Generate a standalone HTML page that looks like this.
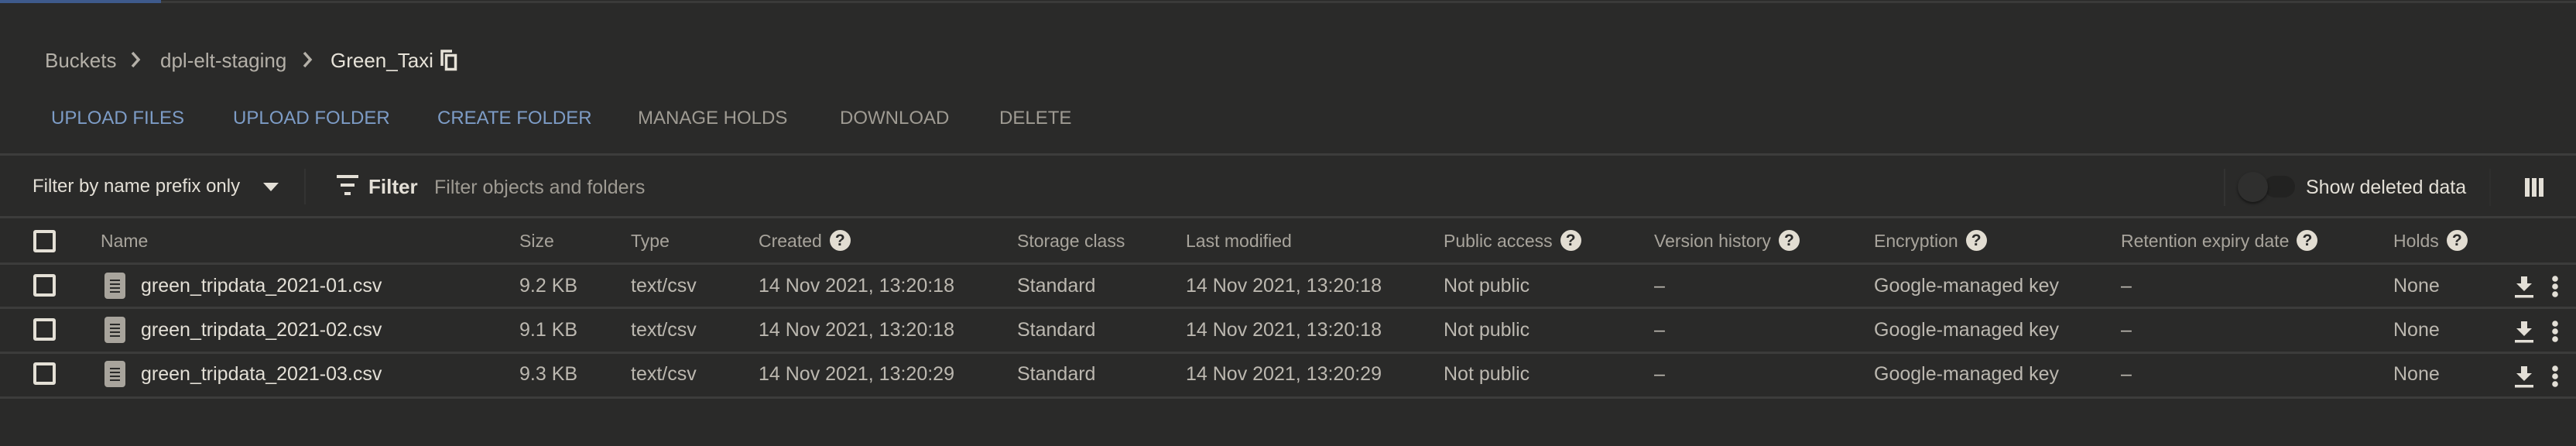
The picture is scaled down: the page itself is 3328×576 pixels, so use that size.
<!DOCTYPE html>
<html><head><meta charset="utf-8"><style>
*{margin:0;padding:0;box-sizing:border-box}
body{width:3328px;height:576px;background:#2a2a29;font-family:"Liberation Sans",sans-serif;color:#c9c5bc;position:relative;overflow:hidden;font-size:25px}
.a{position:absolute;white-space:nowrap;line-height:1}
.hl{position:absolute;left:0;width:3328px;height:4px;background:#3c3c3b}
.btn{color:#7d9cc6;font-size:24px}
.btn.g{color:#9f9b93}
.h{color:#a8a49c;font-size:23px;top:300px}
.q{display:inline-block;width:27px;height:27px;border-radius:50%;background:#e2ddd2;color:#2a2a29;font-weight:bold;font-size:21px;text-align:center;line-height:27px;vertical-align:middle;margin-left:10px;margin-top:-4px}
.cb{position:absolute;left:43px;width:29px;height:29px;border:4px solid #e4e0d6;border-radius:3px}
.c{font-size:25px;color:#bcb8b0}
.fi{position:absolute;left:135px;width:27px;height:34px;background:#a8a49c;border-radius:4px}
.fi i{position:absolute;left:7px;width:13px;height:2px;background:#2a2a29}
</style></head><body>
<div style="position:absolute;left:0;top:0;width:208px;height:4px;background:#3e5a8c"></div>
<div style="position:absolute;left:208px;top:1px;width:3120px;height:3px;background:#3a3a39"></div>

<div class="a" style="left:58px;top:65px;color:#b4b0a8;font-size:26px">Buckets</div>
<svg class="a" style="left:168px;top:64px" width="16" height="26" viewBox="0 0 16 26"><path d="M3 4l8 9-8 9" stroke="#b4b0a8" stroke-width="3.5" fill="none"/></svg>
<div class="a" style="left:207px;top:65px;color:#b4b0a8;font-size:26px">dpl-elt-staging</div>
<svg class="a" style="left:390px;top:64px" width="16" height="26" viewBox="0 0 16 26"><path d="M3 4l8 9-8 9" stroke="#b4b0a8" stroke-width="3.5" fill="none"/></svg>
<div class="a" style="left:427px;top:65px;color:#e6e2d8;font-size:26px">Green_Taxi</div>
<svg class="a" style="left:568px;top:63px" width="26" height="30" viewBox="0 0 26 30"><path d="M3 22V3h13" stroke="#e6e2d8" stroke-width="3.5" fill="none"/><rect x="8.5" y="8.5" width="12" height="18" stroke="#e6e2d8" stroke-width="3.5" fill="none"/></svg>

<div class="a btn" style="left:66px;top:141px">UPLOAD FILES</div>
<div class="a btn" style="left:301px;top:141px">UPLOAD FOLDER</div>
<div class="a btn" style="left:565px;top:141px">CREATE FOLDER</div>
<div class="a btn g" style="left:824px;top:141px">MANAGE HOLDS</div>
<div class="a btn g" style="left:1085px;top:141px">DOWNLOAD</div>
<div class="a btn g" style="left:1291px;top:141px">DELETE</div>

<div class="hl" style="top:198px;height:3px"></div>

<div class="a" style="left:42px;top:229px;color:#e3dfd6;font-size:24px">Filter by name prefix only</div>
<svg class="a" style="left:340px;top:234px" width="20" height="14"><path d="M0 2h20L10 13z" fill="#e3dfd6"/></svg>
<div style="position:absolute;left:393px;top:218px;width:2px;height:46px;background:#333332"></div>
<svg class="a" style="left:435px;top:226px" width="28" height="28"><rect x="0" y="0" width="28" height="4" fill="#e3dfd6"/><rect x="5" y="11" width="18" height="4" fill="#e3dfd6"/><rect x="10" y="22" width="8" height="4" fill="#e3dfd6"/></svg>
<div class="a" style="left:476px;top:228px;color:#e3dfd6;font-size:26px;font-weight:bold">Filter</div>
<div class="a" style="left:561px;top:230px;color:#9e9a92;font-size:25px">Filter objects and folders</div>
<div style="position:absolute;left:2873px;top:218px;width:2px;height:48px;background:#333332"></div>
<div style="position:absolute;left:2925px;top:227px;width:40px;height:28px;border-radius:14px;background:#222221"></div>
<div style="position:absolute;left:2891px;top:222px;width:39px;height:39px;border-radius:50%;background:#2f2f2e;box-shadow:0 2px 3px rgba(0,0,0,.5)"></div>
<div class="a" style="left:2979px;top:230px;color:#e3dfd6;font-size:25px">Show deleted data</div>
<div style="position:absolute;left:3216px;top:218px;width:2px;height:48px;background:#2e2e2d"></div>
<svg class="a" style="left:3262px;top:230px" width="25" height="25"><rect x="0" y="0" width="6" height="24" fill="#e3dfd6"/><rect x="9" y="0" width="6" height="24" fill="#e3dfd6"/><rect x="18" y="0" width="6" height="24" fill="#e3dfd6"/></svg>

<div class="hl" style="top:279px;height:3px"></div>

<div class="cb" style="top:297px"></div>
<div class="a h" style="left:130px">Name</div>
<div class="a h" style="left:671px">Size</div>
<div class="a h" style="left:815px">Type</div>
<div class="a h" style="left:980px">Created<span class="q">?</span></div>
<div class="a h" style="left:1314px">Storage class</div>
<div class="a h" style="left:1532px">Last modified</div>
<div class="a h" style="left:1865px">Public access<span class="q">?</span></div>
<div class="a h" style="left:2137px">Version history<span class="q">?</span></div>
<div class="a h" style="left:2421px">Encryption<span class="q">?</span></div>
<div class="a h" style="left:2740px">Retention expiry date<span class="q">?</span></div>
<div class="a h" style="left:3092px">Holds<span class="q">?</span></div>

<div class="hl" style="top:339px;height:3px"></div>

<div class="cb" style="top:354px"></div>
<div class="cb" style="top:411px"></div>
<div class="cb" style="top:468px"></div>

<div class="fi" style="top:352px"><i style="top:9px"></i><i style="top:14px"></i><i style="top:19px"></i><i style="top:24px"></i></div>
<div class="fi" style="top:409px"><i style="top:9px"></i><i style="top:14px"></i><i style="top:19px"></i><i style="top:24px"></i></div>
<div class="fi" style="top:466px"><i style="top:9px"></i><i style="top:14px"></i><i style="top:19px"></i><i style="top:24px"></i></div>

<div class="a c" style="left:182px;top:357px;color:#e3dfd6">green_tripdata_2021-01.csv</div>
<div class="a c" style="left:671px;top:357px">9.2 KB</div>
<div class="a c" style="left:815px;top:357px">text/csv</div>
<div class="a c" style="left:980px;top:357px">14 Nov 2021, 13:20:18</div>
<div class="a c" style="left:1314px;top:357px">Standard</div>
<div class="a c" style="left:1532px;top:357px">14 Nov 2021, 13:20:18</div>
<div class="a c" style="left:1865px;top:357px">Not public</div>
<div class="a c" style="left:2137px;top:357px">–</div>
<div class="a c" style="left:2421px;top:357px">Google-managed key</div>
<div class="a c" style="left:2740px;top:357px">–</div>
<div class="a c" style="left:3092px;top:357px">None</div>

<div class="hl" style="top:396px;height:3px"></div>

<div class="a c" style="left:182px;top:414px;color:#e3dfd6">green_tripdata_2021-02.csv</div>
<div class="a c" style="left:671px;top:414px">9.1 KB</div>
<div class="a c" style="left:815px;top:414px">text/csv</div>
<div class="a c" style="left:980px;top:414px">14 Nov 2021, 13:20:18</div>
<div class="a c" style="left:1314px;top:414px">Standard</div>
<div class="a c" style="left:1532px;top:414px">14 Nov 2021, 13:20:18</div>
<div class="a c" style="left:1865px;top:414px">Not public</div>
<div class="a c" style="left:2137px;top:414px">–</div>
<div class="a c" style="left:2421px;top:414px">Google-managed key</div>
<div class="a c" style="left:2740px;top:414px">–</div>
<div class="a c" style="left:3092px;top:414px">None</div>

<div class="hl" style="top:454px;height:3px"></div>

<div class="a c" style="left:182px;top:471px;color:#e3dfd6">green_tripdata_2021-03.csv</div>
<div class="a c" style="left:671px;top:471px">9.3 KB</div>
<div class="a c" style="left:815px;top:471px">text/csv</div>
<div class="a c" style="left:980px;top:471px">14 Nov 2021, 13:20:29</div>
<div class="a c" style="left:1314px;top:471px">Standard</div>
<div class="a c" style="left:1532px;top:471px">14 Nov 2021, 13:20:29</div>
<div class="a c" style="left:1865px;top:471px">Not public</div>
<div class="a c" style="left:2137px;top:471px">–</div>
<div class="a c" style="left:2421px;top:471px">Google-managed key</div>
<div class="a c" style="left:2740px;top:471px">–</div>
<div class="a c" style="left:3092px;top:471px">None</div>

<div class="hl" style="top:512px;height:3px"></div>

<svg class="a" style="left:3248px;top:357px" width="26" height="28"><path d="M9 0h8v9h6L13 19 3 9h6z" fill="#e3dfd6"/><rect x="1" y="24" width="24" height="3.5" fill="#e3dfd6"/></svg>
<svg class="a" style="left:3296px;top:356px" width="10" height="28"><circle cx="5" cy="4" r="3.8" fill="#e3dfd6"/><circle cx="5" cy="14" r="3.8" fill="#e3dfd6"/><circle cx="5" cy="24" r="3.8" fill="#e3dfd6"/></svg>
<svg class="a" style="left:3248px;top:415px" width="26" height="28"><path d="M9 0h8v9h6L13 19 3 9h6z" fill="#e3dfd6"/><rect x="1" y="24" width="24" height="3.5" fill="#e3dfd6"/></svg>
<svg class="a" style="left:3296px;top:414px" width="10" height="28"><circle cx="5" cy="4" r="3.8" fill="#e3dfd6"/><circle cx="5" cy="14" r="3.8" fill="#e3dfd6"/><circle cx="5" cy="24" r="3.8" fill="#e3dfd6"/></svg>
<svg class="a" style="left:3248px;top:473px" width="26" height="28"><path d="M9 0h8v9h6L13 19 3 9h6z" fill="#e3dfd6"/><rect x="1" y="24" width="24" height="3.5" fill="#e3dfd6"/></svg>
<svg class="a" style="left:3296px;top:472px" width="10" height="28"><circle cx="5" cy="4" r="3.8" fill="#e3dfd6"/><circle cx="5" cy="14" r="3.8" fill="#e3dfd6"/><circle cx="5" cy="24" r="3.8" fill="#e3dfd6"/></svg>
</body></html>
